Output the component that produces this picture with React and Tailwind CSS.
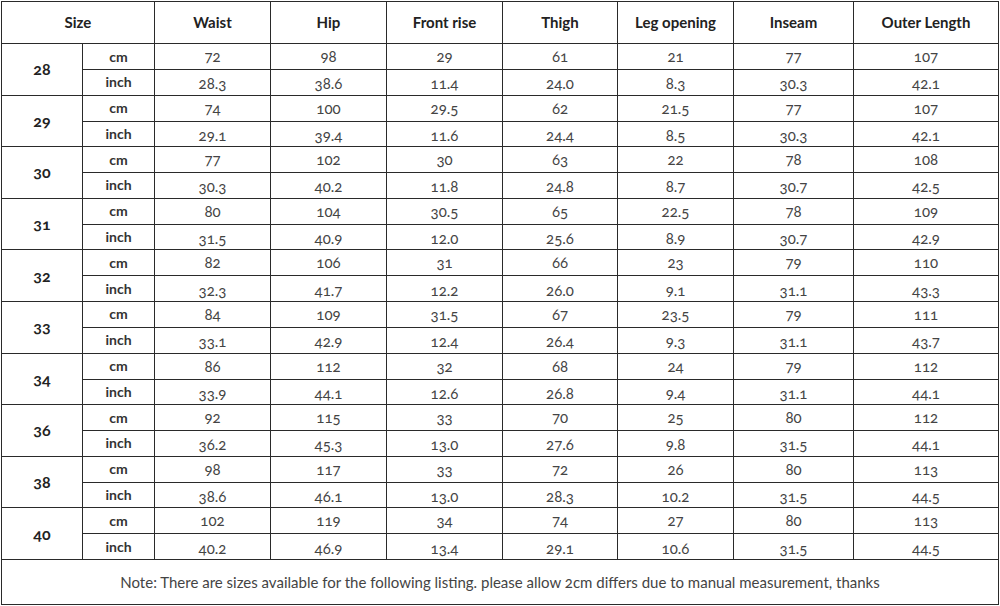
import React from 'react';

const cols = ['Waist', 'Hip', 'Front rise', 'Thigh', 'Leg opening', 'Inseam', 'Outer Length'];

const sizes = [
  { size: '28', cm: ['72', '98', '29', '61', '21', '77', '107'], inch: ['28.3', '38.6', '11.4', '24.0', '8.3', '30.3', '42.1'] },
  { size: '29', cm: ['74', '100', '29.5', '62', '21.5', '77', '107'], inch: ['29.1', '39.4', '11.6', '24.4', '8.5', '30.3', '42.1'] },
  { size: '30', cm: ['77', '102', '30', '63', '22', '78', '108'], inch: ['30.3', '40.2', '11.8', '24.8', '8.7', '30.7', '42.5'] },
  { size: '31', cm: ['80', '104', '30.5', '65', '22.5', '78', '109'], inch: ['31.5', '40.9', '12.0', '25.6', '8.9', '30.7', '42.9'] },
  { size: '32', cm: ['82', '106', '31', '66', '23', '79', '110'], inch: ['32.3', '41.7', '12.2', '26.0', '9.1', '31.1', '43.3'] },
  { size: '33', cm: ['84', '109', '31.5', '67', '23.5', '79', '111'], inch: ['33.1', '42.9', '12.4', '26.4', '9.3', '31.1', '43.7'] },
  { size: '34', cm: ['86', '112', '32', '68', '24', '79', '112'], inch: ['33.9', '44.1', '12.6', '26.8', '9.4', '31.1', '44.1'] },
  { size: '36', cm: ['92', '115', '33', '70', '25', '80', '112'], inch: ['36.2', '45.3', '13.0', '27.6', '9.8', '31.5', '44.1'] },
  { size: '38', cm: ['98', '117', '33', '72', '26', '80', '113'], inch: ['38.6', '46.1', '13.0', '28.3', '10.2', '31.5', '44.5'] },
  { size: '40', cm: ['102', '119', '34', '74', '27', '80', '113'], inch: ['40.2', '46.9', '13.4', '29.1', '10.6', '31.5', '44.5'] },
];

const cell = 'border border-[#2a2a2a] text-center p-0';

export default function App() {
  return (
    <div className="w-[1000px] h-[606px] bg-white pt-px pl-px font-['Lato','Open_Sans',sans-serif] oldstyle-nums">
      <table className="table-fixed border-collapse w-[997px]">
        <colgroup>
          <col className="w-[81px]" />
          <col className="w-[72px]" />
          <col className="w-[116px]" />
          <col className="w-[116px]" />
          <col className="w-[116px]" />
          <col className="w-[115px]" />
          <col className="w-[116px]" />
          <col className="w-[120px]" />
          <col className="w-[145px]" />
        </colgroup>
        <thead>
          <tr className="h-[42px]">
            <th colSpan={2} className={`${cell} text-[15px] font-bold text-[#222]`}>Size</th>
            {cols.map((c) => (
              <th key={c} className={`${cell} text-[15px] font-bold text-[#222]`}>{c}</th>
            ))}
          </tr>
        </thead>
        <tbody>
          {sizes.map((s) => (
            <React.Fragment key={s.size}>
              <tr className="h-[26px]">
                <td rowSpan={2} className={`${cell} text-[16px] font-bold text-[#222]`}>{s.size}</td>
                <td className={`${cell} text-[14px] font-bold text-[#333] leading-none`}>cm</td>
                {s.cm.map((v, i) => (
                  <td key={i} className={`${cell} text-[15px] text-[#444] leading-none`}>{v}</td>
                ))}
              </tr>
              <tr className="h-[25.6px]">
                <td className={`${cell} text-[14px] font-bold text-[#333] leading-none`}>inch</td>
                {s.inch.map((v, i) => (
                  <td key={i} className={`${cell} text-[15px] text-[#444] leading-none pt-[3px]`}>{v}</td>
                ))}
              </tr>
            </React.Fragment>
          ))}
          <tr className="h-[45px]">
            <td colSpan={9} className={`${cell} text-[15px] text-[#444]`}>
              Note: There are sizes available for the following listing. please allow 2cm differs due to manual measurement, thanks
            </td>
          </tr>
        </tbody>
      </table>
    </div>
  );
}
